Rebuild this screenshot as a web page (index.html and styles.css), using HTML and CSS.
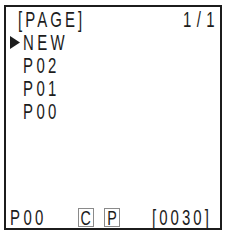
FILE: index.html
```html
<!DOCTYPE html>
<html>
<head>
<meta charset="utf-8">
<link rel="stylesheet" href="styles.css">
</head>
<body>
<div class="screen">
  <div class="header">
    <span class="t title">[PAGE]</span>
    <span class="t t-right">1/<span class="last">1</span></span>
  </div>
  <div class="list">
    <div class="row"><span class="marker"><svg width="10" height="13" viewBox="0 0 10 13"><polygon points="0,0 10,6.5 0,13" fill="#1c1c1c"/></svg></span><span class="t">NEW</span></div>
    <div class="row"><span class="marker"></span><span class="t">P02</span></div>
    <div class="row"><span class="marker"></span><span class="t">P01</span></div>
    <div class="row"><span class="marker"></span><span class="t">P00</span></div>
  </div>
  <div class="footer">
    <span class="cur"><span class="t">P00</span></span>
    <span class="box box-c"><span class="tb">C</span></span>
    <span class="box box-p"><span class="tb">P</span></span>
    <span class="num"><span class="t">[0030]</span></span>
  </div>
</div>
</body>
</html>
```
FILE: styles.css
```css
html, body {
  margin: 0;
  padding: 0;
  background: #ffffff;
}
body {
  font-family: "Liberation Sans", Arial, sans-serif;
  font-size: 22px;
  line-height: 23px;
  color: #1c1c1c;
}
.screen {
  box-sizing: border-box;
  margin: 5px 0 0 4px;
  width: 218px;
  height: 225px;
  border: 2px solid #1c1c1c;
  display: flex;
  flex-direction: column;
  padding: 1px 5px 0 4px;
  overflow: hidden;
}
.t {
  display: inline-block;
  white-space: nowrap;
  letter-spacing: 5px;
  transform: scaleX(0.68);
  transform-origin: left center;
}
.title {
  letter-spacing: 4.5px;
}
.t-right {
  transform-origin: right center;
  letter-spacing: 8px;
}
.t-right .last {
  letter-spacing: 0;
}
.header {
  display: flex;
  justify-content: space-between;
  padding-left: 8px;
}
.list {
  display: flex;
  flex-direction: column;
}
.row {
  display: flex;
  align-items: center;
}
.marker {
  width: 13px;
  height: 23px;
  display: flex;
  align-items: center;
}
.footer {
  margin-top: auto;
  margin-bottom: -1px;
  display: flex;
  align-items: center;
}
.footer > span {
  flex: none;
}
.cur {
  width: 68px;
}
.box {
  box-sizing: border-box;
  width: 16px;
  height: 19px;
  border: 1px solid #8a8a8a;
  display: flex;
  align-items: center;
  justify-content: center;
}
.tb {
  display: inline-block;
  font-size: 21px;
  line-height: 17px;
  transform: scaleX(0.68);
}
.box-c {
  margin-right: 10px;
}
.box-p {
  margin-right: 32px;
}
.num {
  width: 60px;
}
.num .t {
  letter-spacing: 4.5px;
}
```
